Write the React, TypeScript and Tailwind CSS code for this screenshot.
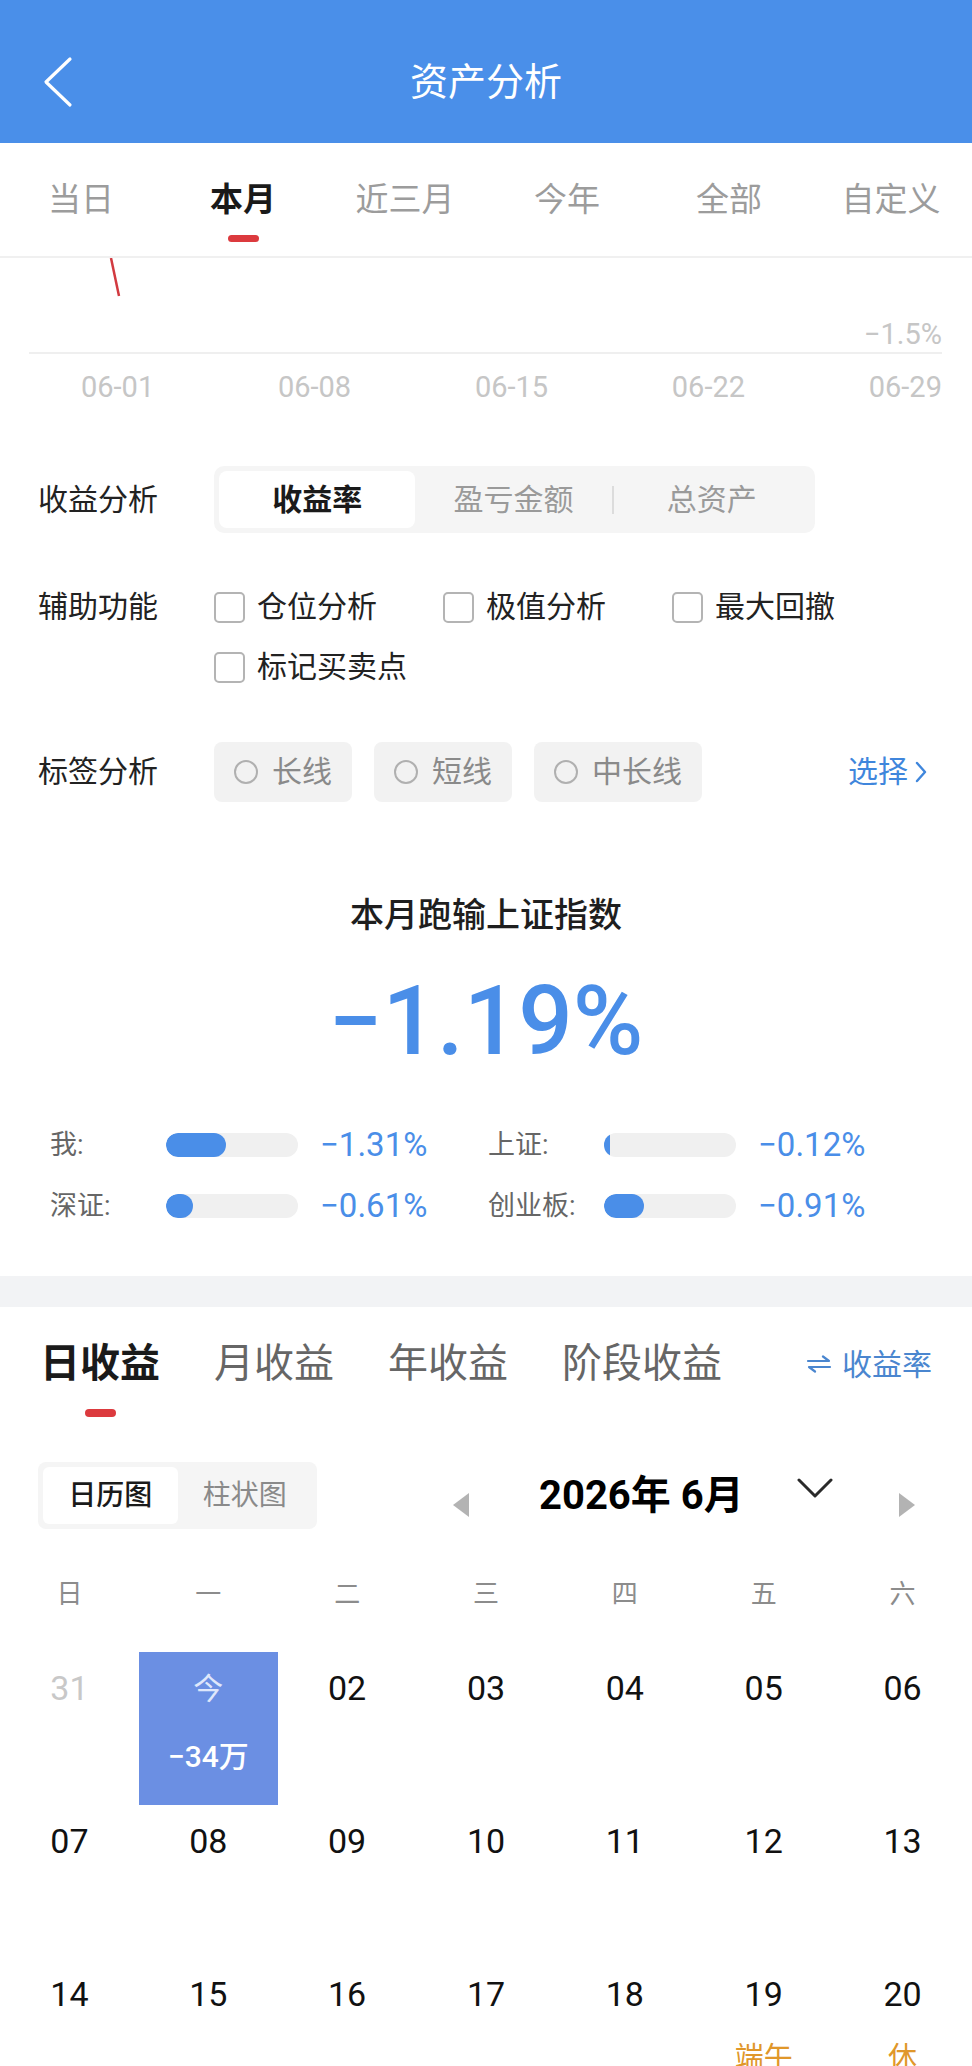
import { useState } from 'react';

const periodTabs = ['当日', '本月', '近三月', '今年', '全部', '自定义'];
const dateTicks = ['06-01', '06-08', '06-15', '06-22', '06-29'];
const weekDays = ['日', '一', '二', '三', '四', '五', '六'];

const compareRows = [
  { label: '我:', fill: 60, value: '−1.31%' },
  { label: '上证:', fill: 6, value: '−0.12%' },
  { label: '深证:', fill: 27, value: '−0.61%' },
  { label: '创业板:', fill: 40, value: '−0.91%' },
];

type Day = { n: string; muted?: boolean; today?: boolean; note?: string; amount?: string };

const calendar: Day[][] = [
  [{ n: '31', muted: true }, { n: '01', today: true, amount: '−34万' }, { n: '02' }, { n: '03' }, { n: '04' }, { n: '05' }, { n: '06' }],
  [{ n: '07' }, { n: '08' }, { n: '09' }, { n: '10' }, { n: '11' }, { n: '12' }, { n: '13' }],
  [{ n: '14' }, { n: '15' }, { n: '16' }, { n: '17' }, { n: '18' }, { n: '19', note: '端午' }, { n: '20', note: '休' }],
  [{ n: '21' }, { n: '22' }, { n: '23' }, { n: '24' }, { n: '25' }, { n: '26' }, { n: '27' }],
];

function Checkbox({ label }: { label: string }) {
  return (
    <div className="flex items-center gap-[12px]">
      <span className="w-[31px] h-[31px] rounded-[5px] border-2 border-[#b4b4b4] bg-white" />
      <span className="text-[30px] leading-[40px] text-[#222]">{label}</span>
    </div>
  );
}

function TagChip({ label }: { label: string }) {
  return (
    <div className="h-[60px] px-[20px] rounded-[8px] bg-[#f2f2f2] flex items-center gap-[14px]">
      <span className="w-[24px] h-[24px] rounded-full border-2 border-[#b0b0b0]" />
      <span className="text-[30px] leading-[40px] text-[#8a8a8a]">{label}</span>
    </div>
  );
}

export default function App() {
  const [period, setPeriod] = useState(1);
  const [metric, setMetric] = useState(0);
  const [incomeTab, setIncomeTab] = useState(0);
  const [view, setView] = useState(0);

  return (
    <div className="w-[972px] h-[2066px] overflow-hidden bg-white text-[#222] font-[Roboto,'Noto_Sans_CJK_SC',sans-serif]">
      {/* Title bar */}
      <header className="h-[143px] bg-[#4a8fe9] pt-[20px] flex items-center">
        <div className="w-[120px] pl-[42px] flex items-center">
          <svg width="32" height="52" viewBox="0 0 32 52" fill="none">
            <polyline points="28,3 4,26 28,49" stroke="white" strokeWidth="3.2" strokeLinecap="round" strokeLinejoin="round" />
          </svg>
        </div>
        <h1 className="flex-1 text-center text-white text-[38px] leading-[48px]">资产分析</h1>
        <div className="w-[120px]" />
      </header>

      {/* Period tabs */}
      <nav className="h-[115px] grid grid-cols-6 border-b-2 border-[#f0f0f0]">
        {periodTabs.map((t, i) => (
          <button key={t} onClick={() => setPeriod(i)} className="flex flex-col items-center pt-[37px]">
            <span className={`text-[33px] leading-[40px] ${period === i ? 'font-bold text-[#1a1a1a]' : 'text-[#9c9c9c]'}`}>{t}</span>
            {period === i && <span className="mt-[15px] w-[31px] h-[7px] rounded-full bg-[#dc3a3e]" />}
          </button>
        ))}
      </nav>

      {/* Chart tail */}
      <div className="relative h-[94px] flex flex-col justify-end items-end pr-[30px] pb-[3px]">
        <svg className="absolute left-0 top-0" width="972" height="94">
          <line x1="111" y1="0" x2="119" y2="38" stroke="#d23a40" strokeWidth="2.5" />
        </svg>
        <span className="text-[29px] leading-[30px] text-[#c6c6c6]">−1.5%</span>
      </div>
      <div className="ml-[29px] mr-[30px] h-[2px] bg-[#efefef]" />
      <div className="mt-[18px] pl-[81px] pr-[30px] flex justify-between">
        {dateTicks.map((d) => (
          <span key={d} className="text-[29px] leading-[30px] text-[#c6c6c6]">{d}</span>
        ))}
      </div>

      {/* Options */}
      <section className="px-[38px] mt-[64px]">
        <div className="flex items-center">
          <span className="w-[176px] text-[30px] leading-[40px] text-[#222]">收益分析</span>
          <div className="w-[601px] h-[67px] rounded-[10px] bg-[#f5f5f5] p-[5px] flex items-center">
            {['收益率', '盈亏金额', '总资产'].map((m, i) => (
              <div key={m} className="contents">
                {i === 2 && <span className={`w-[2px] h-[28px] ${metric === 0 ? 'bg-[#dcdcdc]' : 'bg-transparent'}`} />}
                <button
                  onClick={() => setMetric(i)}
                  className={`flex-1 h-full rounded-[8px] text-[30px] leading-[40px] ${metric === i ? 'bg-white font-bold text-[#1a1a1a]' : 'text-[#9a9a9a]'}`}
                >
                  {m}
                </button>
              </div>
            ))}
          </div>
        </div>

        <div className="flex items-start mt-[54px]">
          <span className="w-[176px] text-[30px] leading-[40px] text-[#222]">辅助功能</span>
          <div className="grid grid-cols-[229px_229px_229px] gap-y-[20px]">
            <Checkbox label="仓位分析" />
            <Checkbox label="极值分析" />
            <Checkbox label="最大回撤" />
            <Checkbox label="标记买卖点" />
          </div>
        </div>

        <div className="flex items-center mt-[55px]">
          <span className="w-[176px] text-[30px] leading-[40px] text-[#222]">标签分析</span>
          <div className="flex gap-[22px]">
            <TagChip label="长线" />
            <TagChip label="短线" />
            <TagChip label="中长线" />
          </div>
          <button className="ml-auto mr-[6px] flex items-center gap-[6px] text-[30px] leading-[40px] text-[#3f86dc]">
            选择
            <svg width="14" height="24" viewBox="0 0 14 24" fill="none">
              <polyline points="3,3 11,12 3,21" stroke="#3f86dc" strokeWidth="2.4" strokeLinecap="round" strokeLinejoin="round" />
            </svg>
          </button>
        </div>
      </section>

      {/* Benchmark summary */}
      <section className="mt-[91px] flex flex-col items-center">
        <h2 className="text-[34px] leading-[44px] font-medium text-[#1e1e1e]">本月跑输上证指数</h2>
        <div className="mt-[36px] text-[96px] leading-[96px] font-medium text-[#4a8ee8]">−1.19%</div>
      </section>

      <div className="mt-[56px] pl-[50px] grid grid-cols-[438px_438px] gap-y-[21px]">
        {compareRows.map((r) => (
          <div key={r.label} className="flex items-center h-[40px]">
            <span className="w-[116px] text-[27px] leading-[40px] text-[#666]">{r.label}</span>
            <div className="w-[132px] h-[24px] rounded-full bg-[#f0f0f0] overflow-hidden">
              <div className="h-full rounded-full bg-[#4a8ee8]" style={{ width: r.fill }} />
            </div>
            <span className="ml-[22px] text-[33px] leading-[40px] text-[#4a8ee8]">{r.value}</span>
          </div>
        ))}
      </div>

      <div className="mt-[50px] h-[31px] bg-[#f2f3f5]" />

      {/* Income tabs */}
      <div className="mt-[31px] px-[40px] flex items-start">
        {['日收益', '月收益', '年收益', '阶段收益'].map((t, i) => (
          <button key={t} onClick={() => setIncomeTab(i)} className={`flex flex-col items-center ${i > 0 ? 'ml-[54px]' : ''}`}>
            <span className={`text-[40px] leading-[52px] ${incomeTab === i ? 'font-bold text-[#1a1a1a]' : 'text-[#666]'}`}>{t}</span>
            {incomeTab === i && <span className="mt-[19px] w-[31px] h-[8px] rounded-full bg-[#dc3a3e]" />}
          </button>
        ))}
        <button className="ml-auto flex items-center gap-[10px] h-[52px] text-[30px] text-[#4a86cf]">
          <svg width="26" height="18" viewBox="0 0 26 18" fill="none">
            <path d="M2 6 H23 L17 1.5" stroke="#4a86cf" strokeWidth="2.2" strokeLinecap="round" strokeLinejoin="round" />
            <path d="M24 12 H3 L9 16.5" stroke="#4a86cf" strokeWidth="2.2" strokeLinecap="round" strokeLinejoin="round" />
          </svg>
          收益率
        </button>
      </div>

      {/* View toggle + month nav */}
      <div className="mt-[45px] pl-[38px] flex items-center">
        <div className="w-[279px] h-[67px] rounded-[8px] bg-[#f5f5f5] p-[5px] flex">
          {['日历图', '柱状图'].map((v, i) => (
            <button
              key={v}
              onClick={() => setView(i)}
              className={`flex-1 rounded-[6px] text-[28px] leading-[40px] ${view === i ? 'bg-white font-medium text-[#1a1a1a]' : 'text-[#8a8a8a]'}`}
            >
              {v}
            </button>
          ))}
        </div>
        <svg className="ml-[136px] mt-[18px]" width="16" height="24" viewBox="0 0 16 24">
          <polygon points="16,0 0,12 16,24" fill="#b3b3b3" />
        </svg>
        <span className="ml-[70px] w-[208px] text-[40px] leading-[48px] font-bold text-black whitespace-nowrap">2026年 6月</span>
        <svg className="ml-[50px] -mt-[16px]" width="36" height="22" viewBox="0 0 36 22" fill="none">
          <polyline points="2,3 18,19 34,3" stroke="#2a2a2a" strokeWidth="3" strokeLinecap="round" strokeLinejoin="round" />
        </svg>
        <svg className="ml-[66px] mt-[18px]" width="16" height="24" viewBox="0 0 16 24">
          <polygon points="0,0 16,12 0,24" fill="#b3b3b3" />
        </svg>
      </div>

      {/* Calendar */}
      <div className="mt-[47px] grid grid-cols-7">
        {weekDays.map((w) => (
          <span key={w} className="text-center text-[26px] leading-[36px] text-[#8c8c8c]">{w}</span>
        ))}
      </div>
      <div className="mt-[40px] grid grid-cols-7">
        {calendar.flat().map((d, i) =>
          d.today ? (
            <div key={i} className="h-[153px] bg-[#6b8fe3] flex flex-col items-center pt-[17px]">
              <span className="text-[30px] leading-[40px] text-[#dfe7fb]">今</span>
              <span className="mt-[28px] text-[30px] leading-[40px] font-medium text-white">{d.amount}</span>
            </div>
          ) : (
            <div key={i} className="h-[153px] flex flex-col items-center pt-[16px]">
              <span className={`text-[34px] leading-[40px] ${d.muted ? 'text-[#c8c8c8]' : 'text-[#111]'}`}>{d.n}</span>
              {d.note && <span className="mt-[26px] text-[29px] leading-[36px] text-[#e0972a]">{d.note}</span>}
            </div>
          )
        )}
      </div>
    </div>
  );
}
